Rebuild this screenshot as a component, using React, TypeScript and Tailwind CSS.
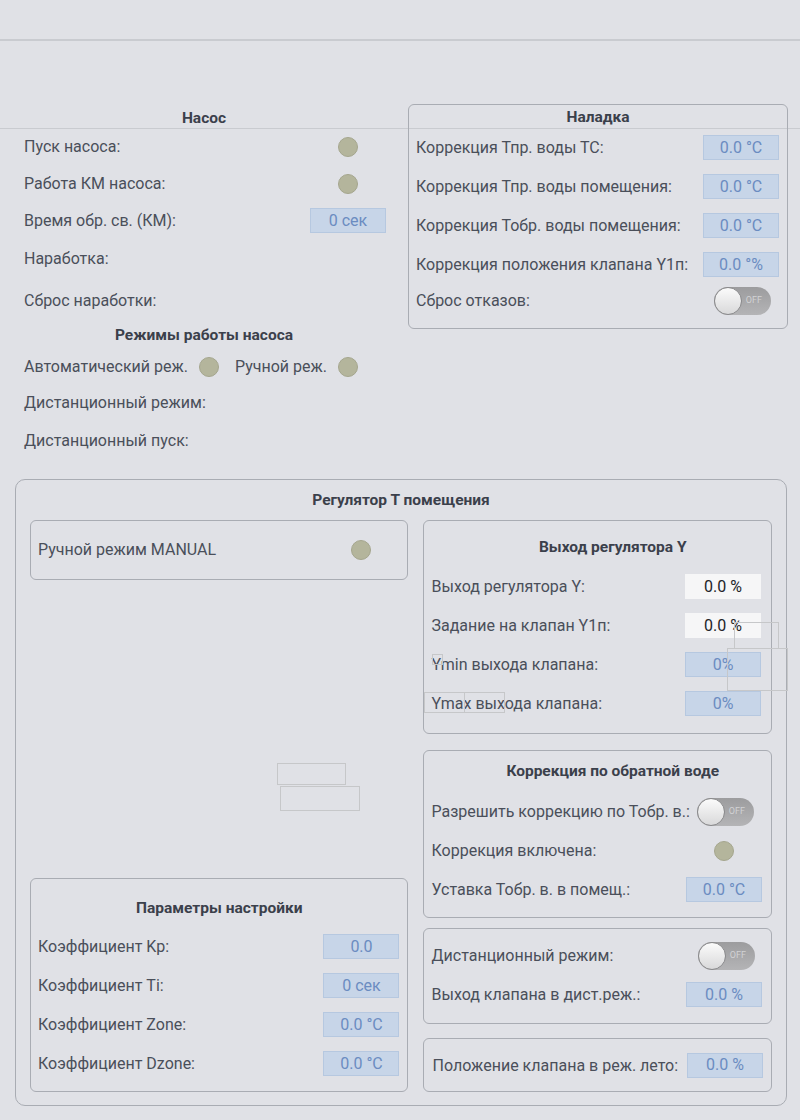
import React from "react";

const Led = () => (
  <div className="w-[20px] h-[20px] rounded-full bg-[#b4b59c] border border-[#a5a68e] shrink-0" />
);

const Val = ({ v, white = false, w = "w-[76px]" }: { v: string; white?: boolean; w?: string }) => (
  <div
    className={
      "h-[25px] flex items-center justify-center text-[16px] shrink-0 " +
      w +
      " " +
      (white
        ? "bg-[#f6f6f7] text-[#222428]"
        : "bg-[#c7d5e8] border border-[#b6c8e0] text-[#6b8cc1]")
    }
  >
    {v}
  </div>
);

const Toggle = () => (
  <div className="relative w-[57px] h-[28px] rounded-full bg-gradient-to-b from-[#9c9c9e] to-[#b4b4b6] shrink-0">
    <div className="absolute left-0 top-0 w-[28px] h-[28px] rounded-full bg-gradient-to-b from-[#fbfbfb] to-[#d9d9da] border border-[#8a8a8c]" />
    <span className="absolute right-[9px] top-[8px] text-[9px] leading-[11px] text-[#d2d2d4]">OFF</span>
  </div>
);

const Title = ({ t, cls = "" }: { t: string; cls?: string }) => (
  <div className={"text-[15.5px] font-bold text-[#3b404b] text-center leading-[20px] h-[20px] " + cls}>{t}</div>
);

const Box = ({ className = "", children }: { className?: string; children?: React.ReactNode }) => (
  <div className={"border border-[#a9acb3] rounded-[6px] " + className}>{children}</div>
);

const Ghost = ({ c }: { c: string }) => <div className={"absolute border border-[#c6c7c9] " + c} />;

export default function App() {
  return (
    <div
      className="relative w-[800px] h-[1120px] bg-[#e0e1e6] text-[#4a4f5a] text-[16px] leading-[20px] overflow-hidden"
      style={{ fontFamily: "Roboto, 'Noto Sans', sans-serif" }}
    >
      <div className="h-[41px] border-b-2 border-[#c9cbd0]" />
      <div className="absolute left-0 top-[128px] w-[800px] h-px bg-[#c9cbd0]" />

      {/* top section */}
      <div className="flex h-[438px]">
        {/* left column */}
        <div className="w-[408px] flex flex-col pt-[67px]">
          <Title t="Насос" />
          <div className="h-[36px] flex items-center justify-between pl-[24px] pr-[50px] pt-[2px]">
            <span>Пуск насоса:</span>
            <Led />
          </div>
          <div className="h-[38px] flex items-center justify-between pl-[24px] pr-[50px] pt-[2px]">
            <span>Работа КМ насоса:</span>
            <Led />
          </div>
          <div className="h-[35px] flex items-center justify-between pl-[24px] pr-[22px] pt-[2px]">
            <span>Время обр. св. (КМ):</span>
            <Val v="0 сек" />
          </div>
          <div className="h-[42px] flex items-center pl-[24px] pt-[2px]">
            <span>Наработка:</span>
          </div>
          <div className="h-[42px] flex items-center pl-[24px] pt-[2px]">
            <span>Сброс наработки:</span>
          </div>
          <div className="h-[26px] flex items-center justify-center pt-[2px]">
            <span className="text-[15.5px] font-bold text-[#3b404b]">Режимы работы насоса</span>
          </div>
          <div className="h-[38px] flex items-center pl-[24px] pt-[2px]">
            <div className="w-[211px] flex items-center justify-between pr-[16px]">
              <span>Автоматический реж.</span>
              <Led />
            </div>
            <div className="w-[123px] flex items-center justify-between">
              <span>Ручной реж.</span>
              <Led />
            </div>
          </div>
          <div className="h-[34px] flex items-center pl-[24px] pt-[2px]">
            <span>Дистанционный режим:</span>
          </div>
          <div className="h-[42px] flex items-center pl-[24px] pt-[2px]">
            <span>Дистанционный пуск:</span>
          </div>
        </div>

        {/* right column: Наладка */}
        <div className="pt-[63px]">
          <Box className="relative w-[380px] h-[225px] flex flex-col">
            <div className="h-[23px] flex items-center justify-center pt-[1px]">
              <span className="text-[15.5px] font-bold text-[#3b404b]">Наладка</span>
            </div>
            {[
              ["Коррекция Тпр. воды ТС:", "0.0 °C"],
              ["Коррекция Тпр. воды помещения:", "0.0 °C"],
              ["Коррекция Тобр. воды помещения:", "0.0 °C"],
              ["Коррекция положения клапана Y1п:", "0.0 °%"],
            ].map(([l, v]) => (
              <div key={l} className="h-[39px] flex items-center justify-between pl-[7px] pr-[8px]">
                <span className="pt-[1px]">{l}</span>
                <Val v={v} />
              </div>
            ))}
            <div className="h-[34px] flex items-center justify-between pl-[7px] pr-[16px]">
              <span>Сброс отказов:</span>
              <Toggle />
            </div>
          </Box>
        </div>
      </div>

      {/* Регулятор Т помещения */}
      <div className="pl-[15px]">
        <div className="w-[772px] h-[627px] border border-[#a9acb3] rounded-[10px] px-[14px] pt-[10px] flex flex-col">
          <Title t="Регулятор Т помещения" />
          <div className="mt-[10px] flex gap-[15px] flex-1 pb-[13px]">
            {/* left */}
            <div className="w-[379px] flex flex-col justify-between">
              <Box className="h-[60px] flex items-center justify-between pl-[7px] pr-[36px]">
                <span>Ручной режим MANUAL</span>
                <Led />
              </Box>
              <Box className="h-[214px] pt-[19px]">
                <Title t="Параметры настройки" />
                <div className="mt-[9px]">
                  {[
                    ["Коэффициент Kp:", "0.0"],
                    ["Коэффициент Ti:", "0 сек"],
                    ["Коэффициент Zone:", "0.0 °C"],
                    ["Коэффициент Dzone:", "0.0 °C"],
                  ].map(([l, v]) => (
                    <div key={l} className="h-[39px] flex items-center justify-between pl-[7px] pr-[8px]">
                      <span className="pt-[1px]">{l}</span>
                      <Val v={v} />
                    </div>
                  ))}
                </div>
              </Box>
            </div>
            {/* right */}
            <div className="w-[349px] flex flex-col">
              <Box className="h-[214px] pt-[16px]">
                <Title t="Выход регулятора Y" cls="pl-[30px]" />
                <div className="mt-[10px]">
                  {[
                    ["Выход регулятора Y:", "0.0 %", true],
                    ["Задание на клапан Y1п:", "0.0 %", true],
                    ["Ymin выхода клапана:", "0%", false],
                    ["Ymax выхода клапана:", "0%", false],
                  ].map(([l, v, w]) => (
                    <div key={l as string} className="h-[39px] flex items-center justify-between pl-[7px] pr-[10px]">
                      <span className="pt-[1px]">{l as string}</span>
                      <Val v={v as string} white={w as boolean} />
                    </div>
                  ))}
                </div>
              </Box>
              <Box className="mt-[16px] h-[168px] pt-[10px]">
                <Title t="Коррекция по обратной воде" cls="pl-[30px]" />
                <div className="mt-[11px]">
                  <div className="h-[39px] flex items-center justify-between pl-[7px] pr-[17px]">
                    <span className="pt-[1px]">Разрешить коррекцию по Тобр. в.:</span>
                    <Toggle />
                  </div>
                  <div className="h-[39px] flex items-center justify-between pl-[7px] pr-[37px]">
                    <span className="pt-[1px]">Коррекция включена:</span>
                    <Led />
                  </div>
                  <div className="h-[39px] flex items-center justify-between pl-[7px] pr-[9px]">
                    <span className="pt-[1px]">Уставка Тобр. в. в помещ.:</span>
                    <Val v="0.0 °C" />
                  </div>
                </div>
              </Box>
              <Box className="mt-[10px] h-[96px] pt-[7px]">
                <div className="h-[39px] flex items-center justify-between pl-[7px] pr-[16px]">
                  <span className="pt-[1px]">Дистанционный режим:</span>
                  <Toggle />
                </div>
                <div className="h-[39px] flex items-center justify-between pl-[7px] pr-[9px]">
                  <span className="pt-[1px]">Выход клапана в дист.реж.:</span>
                  <Val v="0.0 %" />
                </div>
              </Box>
              <Box className="mt-[14px] h-[54px] flex items-center justify-between pl-[8px] pr-[8px]">
                <span className="pt-[1px]">Положение клапана в реж. лето:</span>
                <Val v="0.0 %" />
              </Box>
            </div>
          </div>
        </div>
      </div>

      {/* stray outline boxes */}
      <Ghost c="left-[734px] top-[622px] w-[45px] h-[27px]" />
      <Ghost c="left-[727px] top-[648px] w-[61px] h-[43px]" />
      <Ghost c="left-[432px] top-[654px] w-[11px] h-[11px]" />
      <Ghost c="left-[424px] top-[692px] w-[41px] h-[21px]" />
      <Ghost c="left-[464px] top-[692px] w-[41px] h-[21px]" />
      <Ghost c="left-[277px] top-[763px] w-[69px] h-[22px]" />
      <Ghost c="left-[280px] top-[786px] w-[80px] h-[25px]" />
    </div>
  );
}
